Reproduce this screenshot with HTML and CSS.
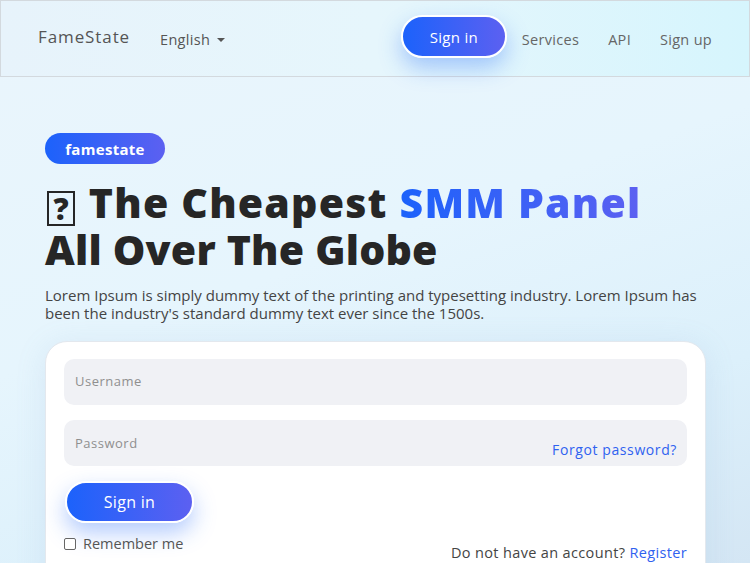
FILE: index.html
```html
<!DOCTYPE html>
<html lang="en">
<head>
<meta charset="utf-8">
<title>FameState</title>
<link rel="stylesheet" href="styles.css">
</head>
<body>
<header class="nav">
  <div class="nav-left">
    <a class="brand">FameState</a>
    <a class="lang">English <span class="caret"></span></a>
  </div>
  <nav class="nav-right">
    <a class="btn btn-nav">Sign in</a>
    <a class="nav-link first">Services</a>
    <a class="nav-link">API</a>
    <a class="nav-link">Sign up</a>
  </nav>
</header>
<main class="hero">
  <span class="badge">famestate</span>
  <h1 class="title"><span class="line1"><span class="tofu">?</span> The Cheapest <span class="accent">SMM Panel</span></span><br>All Over The Globe</h1>
  <p class="lead">Lorem Ipsum is simply dummy text of the printing and typesetting industry. Lorem Ipsum has been the industry's standard dummy text ever since the 1500s.</p>
  <form class="card">
    <div class="field"><span class="ph">Username</span></div>
    <div class="field field-pass"><span class="ph">Password</span><a class="forgot">Forgot password?</a></div>
    <div class="actions">
      <div class="left-actions">
        <a class="btn btn-form">Sign in</a>
        <label class="remember"><span class="check"></span>Remember me</label>
      </div>
      <div class="register">Do not have an account? <a class="link">Register</a></div>
    </div>
  </form>
</main>
</body>
</html>
```
FILE: styles.css
```css
* { box-sizing: border-box; }
html, body { margin: 0; height: 100%; }
body {
  width: 750px;
  height: 563px;
  overflow: hidden;
  font-family: "Open Sans", "Noto Sans", sans-serif;
  background: linear-gradient(160deg, #eaf5fc 0%, #e6f5fd 45%, #dcf0fb 75%, #d4e6f4 100%);
  color: #333;
}
a { text-decoration: none; color: inherit; }

.nav {
  height: 77px;
  border: 1px solid #d3d9de;
  background: linear-gradient(90deg, #e7f3fb 0%, #e6f6fc 50%, #d6f5fd 100%);
  display: flex;
  align-items: center;
  justify-content: space-between;
  padding: 0 37px 0 37px;
}
.nav-left { display: flex; align-items: center; gap: 30px; }
.brand { font-size: 17px; color: #555; letter-spacing: 0.9px; margin-top: -4px; }
.lang { font-size: 14.5px; color: #555; display: flex; align-items: center; gap: 7px; margin-top: 2px; letter-spacing: 0.3px; }
.caret {
  width: 0; height: 0;
  border-left: 4px solid transparent;
  border-right: 4px solid transparent;
  border-top: 4px solid #555;
}
.nav-right { display: flex; align-items: center; }
.nav-link { font-size: 14.5px; color: #666; margin-left: 29px; margin-top: 2px; letter-spacing: 0.3px; }
.nav-link.first { margin-left: 15px; }

.btn {
  display: inline-flex;
  align-items: center;
  justify-content: center;
  color: #fff;
  background: linear-gradient(90deg, #1c62fb 0%, #5c60f1 100%);
  border: 2px solid #fff;
  border-radius: 999px;
  box-shadow: 0 10px 22px rgba(40, 110, 250, 0.35);
  letter-spacing: 0.3px;
}
.btn-nav { width: 106px; height: 43px; font-size: 15px; margin-top: -4px; }

.hero { padding: 56px 45px 0 45px; }
.badge {
  display: inline-flex;
  align-items: center;
  justify-content: center;
  width: 120px;
  height: 31px;
  border-radius: 999px;
  background: linear-gradient(90deg, #1c62fb 0%, #5c60f1 100%);
  color: #fff;
  font-weight: 700;
  font-size: 15px;
  letter-spacing: 0.3px;
}
.title {
  margin: 15px 0 0 0;
  font-family: "Open Sans", sans-serif;
  font-weight: 800;
  font-size: 41px;
  line-height: 46px;
  color: #262626;
  letter-spacing: 0.2px;
}
.line1 { letter-spacing: 1.2px; }
.accent {
  background: linear-gradient(90deg, #1c62fb 0%, #5c60f1 100%);
  -webkit-background-clip: text;
  background-clip: text;
  color: transparent;
}
.tofu {
  display: inline-block;
  width: 28px;
  height: 35px;
  border: 2px solid #262626;
  font-size: 30px;
  line-height: 31px;
  text-align: center;
  vertical-align: -2px;
  letter-spacing: 0;
  margin-left: 2px;
  margin-right: 2px;
}
.lead {
  margin: 14px 0 0 0;
  font-size: 15px;
  line-height: 18px;
  color: #444;
}
.card {
  margin-top: 19px;
  width: 661px;
  height: 260px;
  background: #fff;
  border: 1px solid #e3e8ee;
  border-radius: 22px;
  padding: 17px 18px 0 18px;
  box-shadow: 0 4px 30px rgba(120, 160, 200, 0.15);
}
.field {
  height: 46px;
  background: #f0f1f5;
  border-radius: 10px;
  display: flex;
  align-items: center;
  padding: 0 10px 0 11px;
  margin-bottom: 15px;
}
.ph { font-size: 13px; color: #8f8f8f; letter-spacing: 0.5px; margin-top: -2px; }
.field-pass { align-items: stretch; justify-content: space-between; }
.field-pass .ph { margin-top: 14px; }
.forgot { font-size: 14px; color: #2f62f0; align-self: flex-end; margin-bottom: 7px; letter-spacing: 0.6px; }
.actions { display: flex; justify-content: space-between; align-items: flex-end; margin-top: 2px; }
.left-actions { display: flex; flex-direction: column; align-items: flex-start; }
.btn-form { width: 129px; height: 42px; font-size: 16px; margin-left: 1px; }
.remember { display: flex; align-items: center; gap: 7px; font-size: 14.5px; color: #555; margin-top: 11px; }
.check { width: 12px; height: 12px; border: 1px solid #666; border-radius: 2px; background: #fff; }
.register { font-size: 14.5px; color: #444; margin-bottom: -9px; letter-spacing: 0.35px; }
.link { color: #2f62f0; }
```
